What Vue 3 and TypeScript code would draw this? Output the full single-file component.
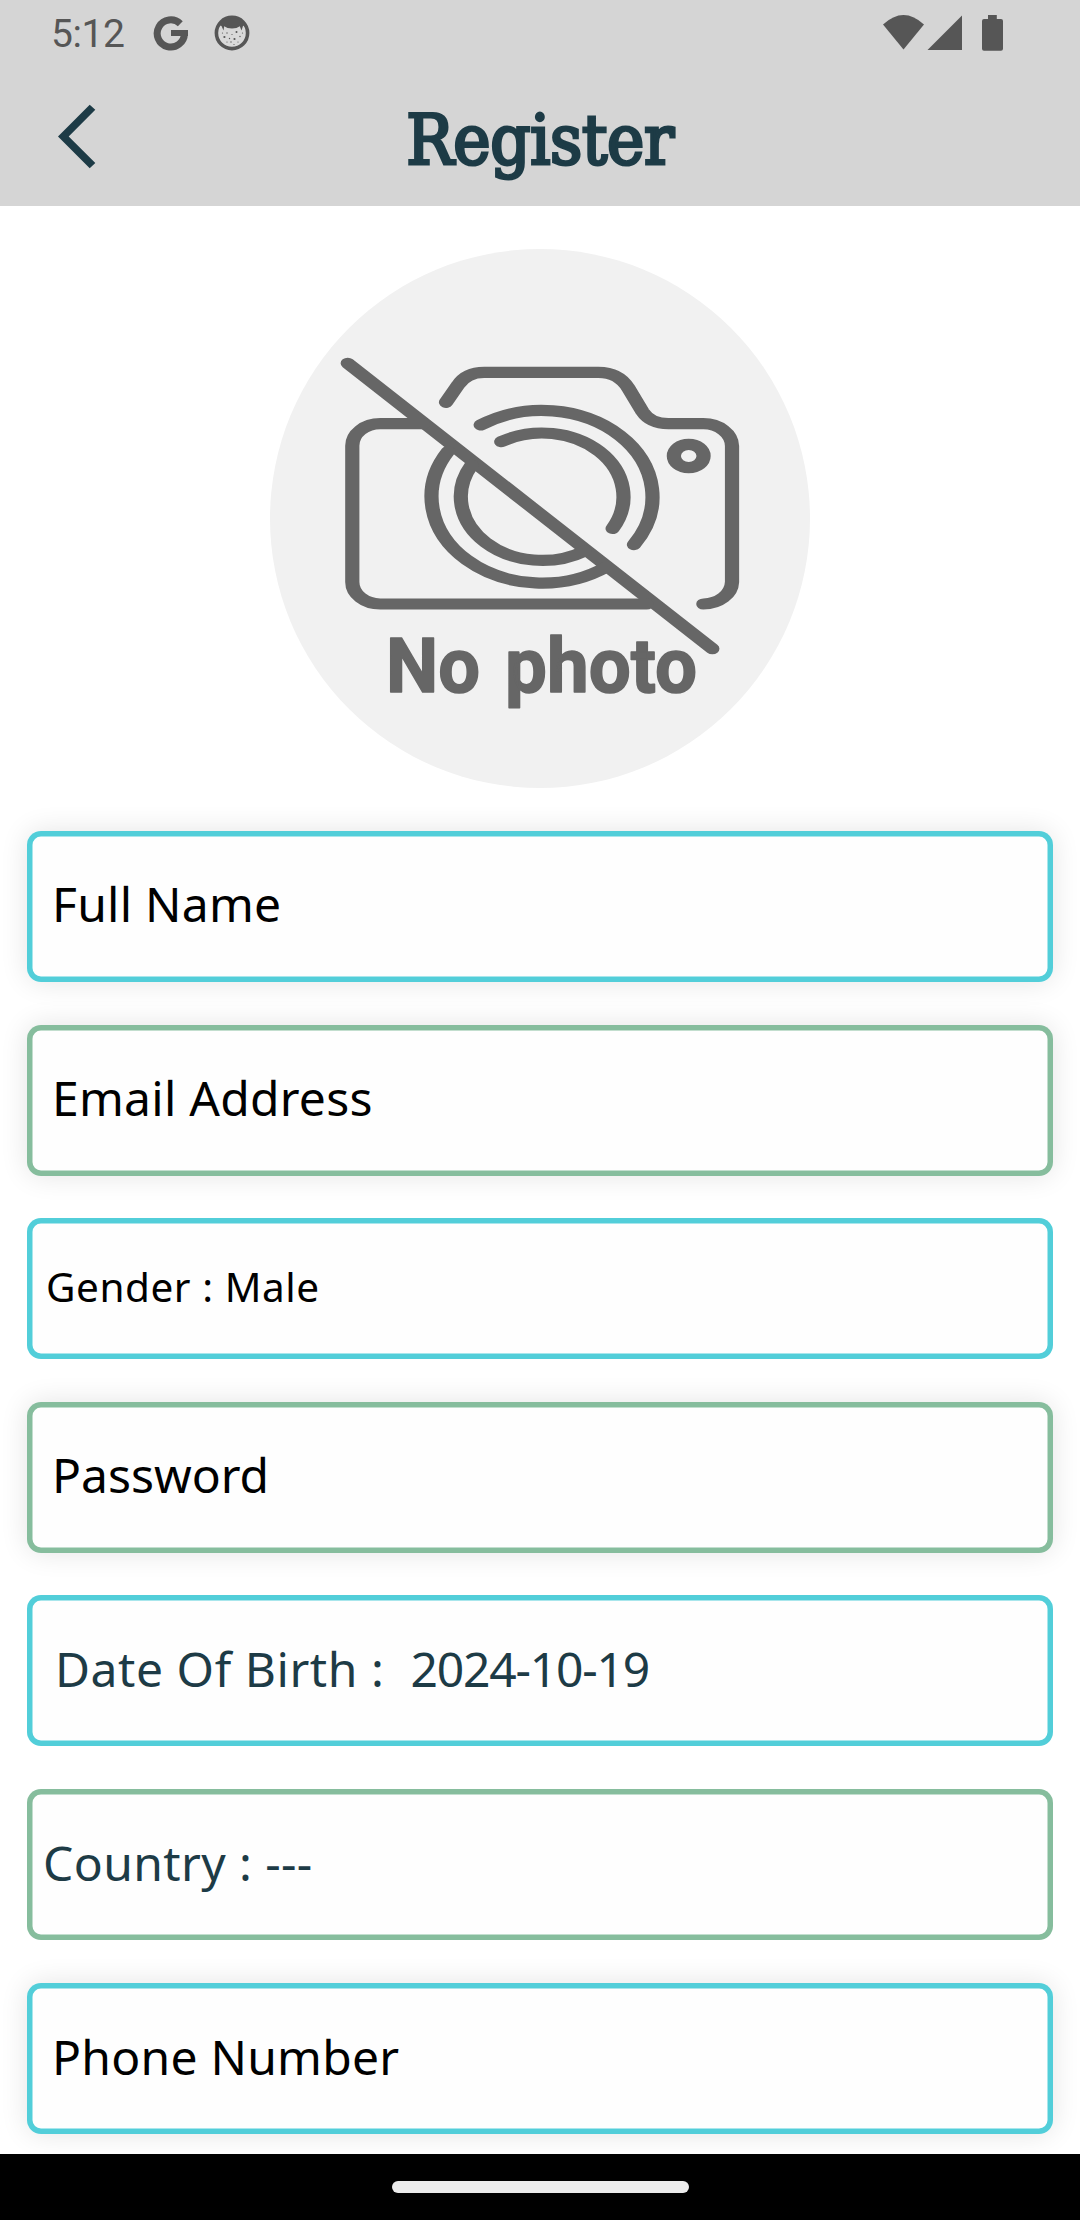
<script setup lang="ts">
interface Part {
  text: string
  spacing: number
}

interface Field {
  parts: Part[]
  kind: 'input' | 'gender' | 'date' | 'country'
  tone: 'aqua' | 'green'
}

const fields: Field[] = [
  { parts: [{ text: 'Full Name', spacing: 0.25 }], kind: 'input', tone: 'aqua' },
  { parts: [{ text: 'Email Address', spacing: 0.25 }], kind: 'input', tone: 'green' },
  { parts: [{ text: 'Gender : Male', spacing: 0.55 }], kind: 'gender', tone: 'aqua' },
  { parts: [{ text: 'Password', spacing: 0 }], kind: 'input', tone: 'green' },
  {
    parts: [
      { text: 'Date Of Birth :  ', spacing: 0.55 },
      { text: '2024-10-19', spacing: -1.2 },
    ],
    kind: 'date',
    tone: 'aqua',
  },
  { parts: [{ text: 'Country : ---', spacing: 0.4 }], kind: 'country', tone: 'green' },
  { parts: [{ text: 'Phone Number', spacing: 0.25 }], kind: 'input', tone: 'aqua' },
]
</script>

<template>
  <div class="screen">
    <header class="header">
      <div class="status">
        <span class="clock">5:12</span>
        <svg class="google" viewBox="0 0 36 36" width="36" height="36">
          <path d="M27.3 8.7A13.6 13.6 0 1 0 31.4 18.6" fill="none" stroke="#565656" stroke-width="7" />
          <path d="M18 15h17v6H18z" fill="#565656" />
        </svg>
        <svg class="cat" viewBox="0 0 36 36" width="36" height="36">
          <circle cx="18" cy="18" r="15.6" fill="#d9d9d9" stroke="#565656" stroke-width="3.6" />
          <path d="M5 10Q10 3 18 3T31 10L29 11 27.5 15.5 25.8 11.2Q23 13.5 18 13.5T10.2 11.2L9.5 15.5 7.5 11z" fill="#565656" />
          <g fill="#565656">
            <circle cx="10.4" cy="22" r="1.1" /><circle cx="20.5" cy="24" r="1.1" />
            <circle cx="22.5" cy="17" r="1" /><circle cx="15.5" cy="23.5" r=".7" />
            <circle cx="13" cy="18" r=".7" /><circle cx="26" cy="21.5" r=".7" />
            <circle cx="17" cy="27" r=".7" /><circle cx="8.5" cy="18" r=".6" />
            <circle cx="18" cy="19.5" r=".6" /><circle cx="13" cy="27" r=".6" />
            <circle cx="24" cy="27" r=".6" /><circle cx="28.5" cy="18" r=".6" />
            <circle cx="20" cy="29.5" r=".6" />
          </g>
        </svg>
        <svg class="signals" viewBox="880 12 126 42" width="126" height="42" fill="#565656">
          <path d="M883 24.5Q903.5 5.5 924 24.5L903.5 49.5z" />
          <path d="M927.5 50L962 15.5V50z" />
          <path d="M988 15h8.8v4h4.2a2 2 0 0 1 2 2v27.7a2 2 0 0 1-2 2h-17a2 2 0 0 1-2-2V21a2 2 0 0 1 2-2h4z" />
        </svg>
      </div>
      <div class="bar">
        <svg class="back" viewBox="54 100 46 73" width="46" height="73">
          <path d="M89.7 104.7L58 136.4 89.7 168.3 95.3 163 68.7 136.4 95.3 109.8z" fill="#1d3b46" />
        </svg>
        <h1 class="title">Register</h1>
      </div>
    </header>

    <main class="form">
      <div class="avatar">
        <svg viewBox="270 249 540 539" width="540" height="539">
          <g transform="translate(540 0) scale(1.27 1)" fill="none" stroke="#666" stroke-width="11.2" stroke-linecap="round">
            <path d="M-151.4 363.3L135.7 648.7" />
            <path d="M-92.1 423.7H-125.8A22 22 0 0 0-147.8 445.7V582A22 22 0 0 0-125.8 604H84" />
            <path d="M128.6 604A22.6 22.6 0 0 0 151.2 582V446A22.6 22.6 0 0 0 128.6 423.7H101Q87 423.7 80.6 411.5L69.5 388Q62 372.3 46 372.3H-44Q-58 372.3-64.5 385L-74 402.3" />
            <path d="M-46.700 425A87 86.300 0 0 1 74 544.600" />
            <path d="M-72.400 451.400A87 86.300 0 0 0 52.600 566.700" />
            <path d="M-30.500 441.700A64 63.700 0 0 1 57.200 528.500" />
            <path d="M-53.900 465.100A64 63.700 0 0 0 35.300 550.900" />
            <circle cx="117.1" cy="456" r="11.7" />
          </g>
          <g class="caption">
            <text x="386" y="692" textLength="94" lengthAdjust="spacingAndGlyphs">No</text>
            <text x="505" y="692" textLength="192" lengthAdjust="spacingAndGlyphs">photo</text>
          </g>
        </svg>
      </div>
      <div v-for="(f, i) in fields" :key="i" class="field" :class="[f.kind, f.tone]">
        <span v-for="p in f.parts" :key="p.text" :style="{ letterSpacing: p.spacing + 'px' }">{{ p.text }}</span>
      </div>
    </main>

    <nav class="nav"><i class="pill"></i></nav>
  </div>
</template>

<style>
body {
  margin: 0;
}
</style>

<style scoped>
.screen {
  width: 1080px;
  height: 2220px;
  display: flex;
  flex-direction: column;
  overflow: hidden;
  background: #fff;
}
.header {
  height: 206px;
  flex: none;
  background: #d5d5d5;
}
.status {
  height: 66px;
  display: flex;
  align-items: center;
  padding: 0 74px 0 51px;
}
.clock {
  width: 102px;
  padding-top: 2px;
  font: 400 39px/64px Roboto, sans-serif;
  letter-spacing: -0.4px;
  color: #565656;
}
.google {
  margin-right: 25px;
}
.signals {
  margin-left: auto;
}
.bar {
  display: grid;
  grid-template-columns: 54px 46px 1fr 100px;
  height: 140px;
  align-items: start;
}
.back {
  grid-column: 2;
  margin-top: 34px;
}
.title {
  margin: 32px 0 0;
  text-align: center;
  font: 400 70px/84px "DejaVu Serif Condensed", "DejaVu Serif", serif;
  font-stretch: condensed;
  letter-spacing: -0.3px;
  color: #1d3b46;
  -webkit-text-stroke: 3px #1d3b46;
}
.form {
  flex: none;
  height: 1948px;
  box-sizing: border-box;
  padding: 43px 27px 0;
  display: flex;
  flex-direction: column;
  gap: 42.8px;
  overflow: hidden;
}
.avatar {
  align-self: center;
  width: 540px;
  height: 539px;
  flex: none;
  border-radius: 50%;
  overflow: hidden;
  background: #f1f1f1;
}
.avatar svg {
  display: block;
}
.caption {
  font: 700 76px Roboto, sans-serif;
  fill: #666;
  stroke: #666;
  stroke-width: 1.5px;
  stroke-linejoin: round;
}
.field {
  --edge: inset 0 0 0 5.5px var(--tone);
  flex: none;
  box-sizing: border-box;
  height: 151px;
  border-radius: 14px;
  background: #fefefe;
  box-shadow: var(--edge);
  display: flex;
  align-items: center;
  padding: 0 0 4px 25px;
  font: 400 48px/66px "Noto Sans", sans-serif;
  color: #000;
  white-space: pre;
}
.aqua {
  --tone: #52ced9;
}
.green {
  --tone: #86bd9d;
}
.input {
  box-shadow: var(--edge), 0 0 28px rgba(0, 0, 0, 0.11);
}
.gender {
  height: 140.5px;
  padding-left: 19px;
  font-size: 40.5px;
}
.date {
  padding-left: 28px;
  color: #1d3b46;
}
.country {
  padding-left: 16px;
  color: #1d3b46;
}
.nav {
  flex: 1;
  display: flex;
  justify-content: center;
  align-items: center;
  background: #000;
}
.pill {
  width: 297px;
  height: 12px;
  border-radius: 6px;
  background: #ececec;
}
</style>
